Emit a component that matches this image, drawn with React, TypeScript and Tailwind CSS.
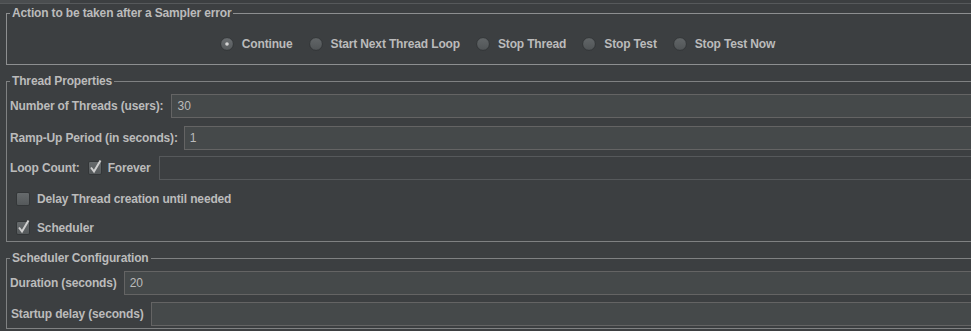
import React from "react";

function Radio({ checked }: { checked?: boolean }) {
  return (
    <svg width="14" height="14" viewBox="0 0 14 14" className="shrink-0">
      <defs>
        <linearGradient id={checked ? "rgc" : "rg"} x1="0" y1="0" x2="0" y2="1">
          <stop offset="0" stopColor={checked ? "#6a6e71" : "#626668"} />
          <stop offset="1" stopColor={checked ? "#55595b" : "#505456"} />
        </linearGradient>
      </defs>
      <circle cx="7" cy="7" r="6.4" fill={`url(#${checked ? "rgc" : "rg"})`} stroke="#323537" strokeWidth="1" />
      {checked && <circle cx="7" cy="7" r="1.8" fill="#d4d4d4" />}
    </svg>
  );
}

function Check({ checked }: { checked?: boolean }) {
  return (
    <svg width="15" height="16" viewBox="0 0 15 16" className="shrink-0">
      <defs>
        <linearGradient id="cg" x1="0" y1="0" x2="0" y2="1">
          <stop offset="0" stopColor="#676b6d" />
          <stop offset="1" stopColor="#54585a" />
        </linearGradient>
      </defs>
      <rect x="0.5" y="2.5" width="13" height="13" rx="1.5" fill="url(#cg)" stroke="#333638" strokeWidth="1" />
      {checked && (
        <polyline points="3,8.5 6,12.5 12.5,1.5" fill="none" stroke="#cfcfcf" strokeWidth="2" strokeLinejoin="miter" />
      )}
    </svg>
  );
}

function Field({ value, disabled }: { value?: string; disabled?: boolean }) {
  return (
    <div
      className={
        disabled
          ? "flex-1 h-full border border-[#56595b] bg-[#3c3f41]"
          : "flex-1 h-full border border-[#646464] bg-[#45494a] flex items-center px-[5px] font-normal tracking-normal text-[#bbbbbb]"
      }
    >
      {value}
    </div>
  );
}

function RadioItem({ label, checked }: { label: string; checked?: boolean }) {
  return (
    <div className="flex items-center gap-[8px]">
      <Radio checked={checked} />
      <span>{label}</span>
    </div>
  );
}

export default function App() {
  return (
    <div className="w-[971px] h-[331px] overflow-hidden bg-[#3c3f41] font-['Liberation_Sans',Arial,sans-serif] text-[12px] font-bold tracking-[-0.15px] text-[#bbbbbb]">
      <div className="w-[995px]">
        <div className="flex h-[4px] border-b border-[#56595b]">
          <div className="w-[70px] bg-[#4a4d4f]" />
        </div>
        <div className="px-[6px]">
          <fieldset className="mt-[2px] border border-[#8d8f90]">
            <legend className="ml-[3px] px-[2px] leading-[15px]">Action to be taken after a Sampler error</legend>
            <div className="h-[43px] pt-[3px] flex items-center justify-center gap-[16px]">
              <RadioItem label="Continue" checked />
              <RadioItem label="Start Next Thread Loop" />
              <RadioItem label="Stop Thread" />
              <RadioItem label="Stop Test" />
              <RadioItem label="Stop Test Now" />
            </div>
          </fieldset>

          <fieldset className="mt-[9px] border border-[#7f8182] pb-[1px]">
            <legend className="ml-[3px] px-[2px] leading-[15px]">Thread Properties</legend>
            <div className="mt-[5px] h-[24px] flex items-center pl-[3px] gap-[8px]">
              <span>Number of Threads (users):</span>
              <Field value="30" />
            </div>
            <div className="mt-[8px] h-[24px] flex items-center pl-[3px] gap-[6px]">
              <span>Ramp-Up Period (in seconds):</span>
              <Field value="1" />
            </div>
            <div className="mt-[6px] h-[24px] flex items-center pl-[3px]">
              <span>Loop Count:</span>
              <span className="ml-[8px] -mt-[2px]">
                <Check checked />
              </span>
              <span className="ml-[5px]">Forever</span>
              <div className="ml-[8px] flex-1 h-full flex">
                <Field disabled />
              </div>
            </div>
            <div className="mt-[6px] h-[25px] flex items-center pl-[9px] gap-[6px]">
              <span className="-mt-[2px]">
                <Check />
              </span>
              <span>Delay Thread creation until needed</span>
            </div>
            <div className="mt-[4px] h-[25px] flex items-center pl-[9px] gap-[6px]">
              <span className="-mt-[2px]">
                <Check checked />
              </span>
              <span>Scheduler</span>
            </div>
          </fieldset>

          <fieldset className="mt-[9px] border border-[#7f8182] pb-[2px]">
            <legend className="ml-[3px] px-[2px] leading-[15px]">Scheduler Configuration</legend>
            <div className="mt-[5px] h-[24px] flex items-center pl-[3px] gap-[7px]">
              <span>Duration (seconds)</span>
              <Field value="20" />
            </div>
            <div className="mt-[7px] h-[24px] flex items-center pl-[4px] gap-[7px]">
              <span>Startup delay (seconds)</span>
              <Field />
            </div>
          </fieldset>
        </div>
      </div>
    </div>
  );
}
